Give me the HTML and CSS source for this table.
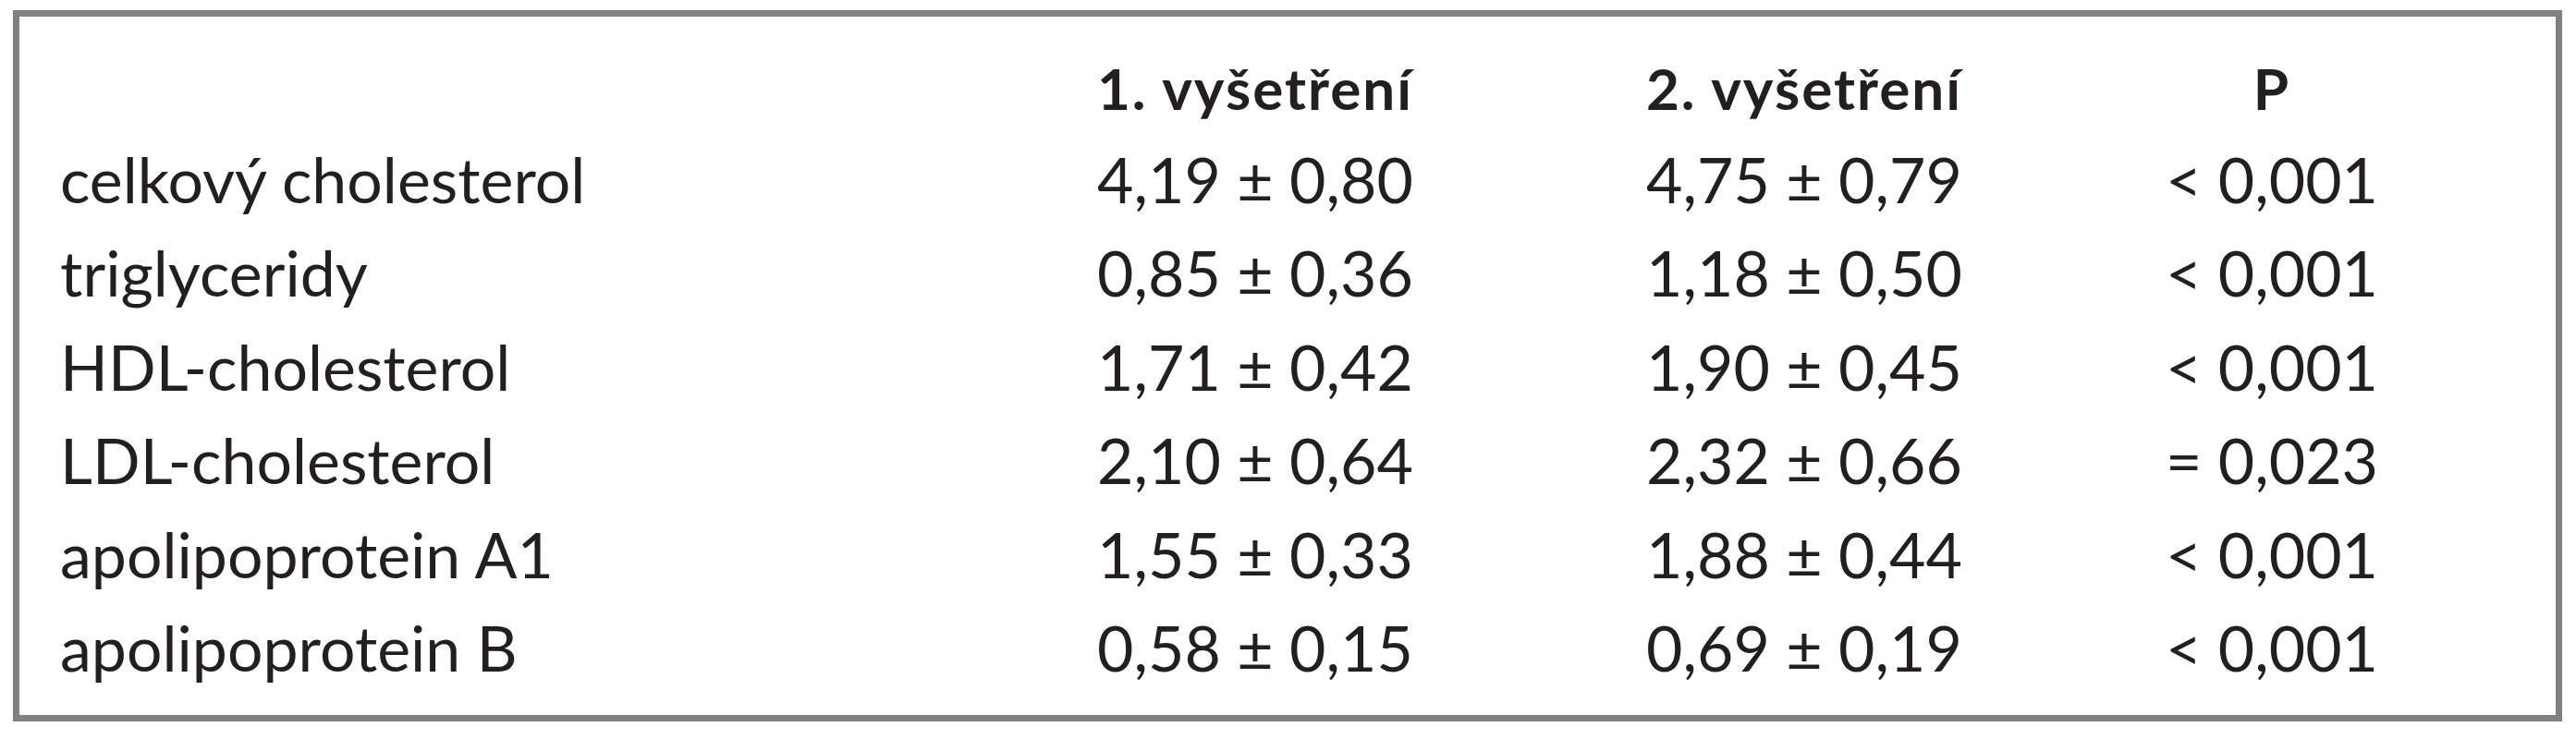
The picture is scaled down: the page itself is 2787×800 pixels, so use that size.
FILE: index.html
```html
<!DOCTYPE html>
<html lang="cs">
<head>
<meta charset="utf-8">
<title>Tabulka</title>
<link rel="stylesheet" href="styles.css">
</head>
<body>
<div class="box">
  <div class="grid">
    <div class="cell head name"></div>
    <div class="cell head">1. vyšetření</div>
    <div class="cell head">2. vyšetření</div>
    <div class="cell head">P</div>

    <div class="cell name">celkový cholesterol</div>
    <div class="cell">4,19 ± 0,80</div>
    <div class="cell">4,75 ± 0,79</div>
    <div class="cell">&lt; 0,001</div>

    <div class="cell name">triglyceridy</div>
    <div class="cell">0,85 ± 0,36</div>
    <div class="cell">1,18 ± 0,50</div>
    <div class="cell">&lt; 0,001</div>

    <div class="cell name">HDL-cholesterol</div>
    <div class="cell">1,71 ± 0,42</div>
    <div class="cell">1,90 ± 0,45</div>
    <div class="cell">&lt; 0,001</div>

    <div class="cell name">LDL-cholesterol</div>
    <div class="cell">2,10 ± 0,64</div>
    <div class="cell">2,32 ± 0,66</div>
    <div class="cell">= 0,023</div>

    <div class="cell name">apolipoprotein A1</div>
    <div class="cell">1,55 ± 0,33</div>
    <div class="cell">1,88 ± 0,44</div>
    <div class="cell">&lt; 0,001</div>

    <div class="cell name">apolipoprotein B</div>
    <div class="cell">0,58 ± 0,15</div>
    <div class="cell">0,69 ± 0,19</div>
    <div class="cell">&lt; 0,001</div>
  </div>
</div>
</body>
</html>
```
FILE: styles.css
```css
html, body {
  margin: 0;
  padding: 0;
  background: #ffffff;
}

body {
  font-family: Lato, "Open Sans", "Liberation Sans", sans-serif;
  color: #231f20;
}

.box {
  box-sizing: border-box;
  width: 2758px;
  margin: 11px 0 0 14px;
  border: 7px solid #808080;
  padding: 30px 98px 23px 0;
}

.grid {
  display: grid;
  grid-template-columns: 1040px 594px 594px 418px;
}

.cell {
  font-size: 68px;
  line-height: 101.4px;
  text-align: center;
  white-space: nowrap;
}

.cell.name {
  text-align: left;
  padding-left: 44px;
}

.cell.head {
  font-size: 62px;
  font-weight: 700;
  line-height: 95px;
  letter-spacing: 2px;
}
```
